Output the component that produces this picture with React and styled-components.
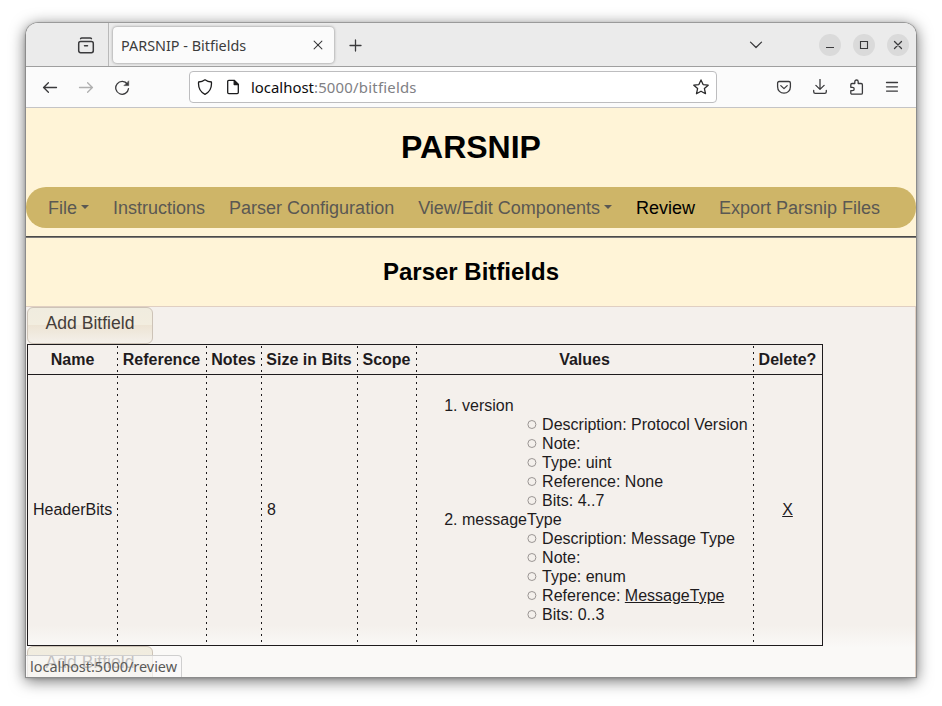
import React from "react";
import styled, { createGlobalStyle, css } from "styled-components";

const Global = createGlobalStyle`
  * { box-sizing: border-box; }
  html, body { margin: 0; background: #fff; overflow: hidden; }
`;

const ui = `"Noto Sans", "Open Sans", sans-serif`;
const ink = "#1e1b1d";

const Desktop = styled.div`
  width: 942px;
  height: 706px;
  padding: 22px 0 0 25px;
  font-family: "Liberation Sans", Arial, sans-serif;
`;

const Window = styled.div`
  position: relative;
  display: flex;
  flex-direction: column;
  width: 892px;
  height: 656px;
  border: 1px solid #8c8c8c;
  border-top-color: #9a9a9a;
  border-radius: 13px 13px 0 0;
  overflow: hidden;
  background: #faf9f7;
`;

const Shadow = styled.div`
  width: 892px;
  border-radius: 13px 13px 0 0;
  box-shadow: 0 3px 15px rgba(0, 0, 0, 0.55), 0 1px 3px rgba(0, 0, 0, 0.15);
`;

const TabStrip = styled.div`
  display: flex;
  align-items: center;
  flex: none;
  height: 44px;
  padding-top: 1px;
  background: #ebebeb;
  border-bottom: 1px solid #9f9f9f;
`;

const ViewButton = styled.div`
  display: flex;
  align-items: center;
  align-self: stretch;
  width: 83px;
  margin-top: -1px;
  padding: 1px 0 0 50px;
  border-right: 1px solid #b9b9b9;
`;

const Tab = styled.div`
  display: flex;
  align-items: center;
  justify-content: space-between;
  width: 221px;
  height: 36px;
  margin-left: 4px;
  padding: 0 10px 0 8px;
  border-radius: 4px;
  background: #fbfbfb;
  box-shadow: 0 0 3px rgba(0, 0, 0, 0.45);
`;

const TabTitle = styled.span`
  padding-top: 2px;
  font: 14.4px/20px ${ui};
  color: #3c3c3c;
`;

const NewTab = styled.div`
  display: flex;
  margin-left: 13px;
`;

const WindowControls = styled.div`
  display: flex;
  align-items: center;
  gap: 12px;
  margin-left: auto;
  padding-right: 7px;
`;

const TabsMenu = styled.div`
  display: flex;
  margin-right: 43px;
`;

const RoundButton = styled.div`
  display: flex;
  align-items: center;
  justify-content: center;
  width: 22px;
  height: 22px;
  border-radius: 50%;
  background: #dadada;
`;

const NavBar = styled.div`
  display: flex;
  align-items: center;
  flex: none;
  height: 41px;
  padding: 0 16px;
  background: #fbfbfb;
  border-bottom: 1px solid #c4c4c6;
`;

const NavButtons = styled.div`
  display: flex;
  gap: 20px;
  width: 147px;
`;

const AddressBar = styled.div`
  display: flex;
  align-items: center;
  width: 528px;
  height: 32px;
  padding: 0 7px;
  gap: 12px;
  border: 1px solid #bdbdbf;
  border-radius: 4px;
  background: #fff;
`;

const Url = styled.span`
  flex: 1;
  margin-left: -2px;
  font: 14.9px/20px ${ui};
  letter-spacing: 0.22px;
  color: #808084;
`;

const Host = styled.span`
  letter-spacing: 0;
  color: #0c0c0d;
`;

const NavTools = styled.div`
  display: flex;
  gap: 20px;
  margin-left: auto;
`;

const Page = styled.main`
  display: flex;
  flex-direction: column;
  flex: 1;
  min-height: 0;
  background: #fff4d7;
`;

const Title = styled.h1`
  margin: 0;
  font-size: 32px;
  line-height: 79px;
  text-align: center;
  color: #000;
`;

const Menu = styled.nav`
  display: flex;
  align-items: center;
  gap: 24px;
  height: 41px;
  padding: 1px 22px 0;
  border-radius: 20px;
  background: #ceb568;
`;

const MenuItem = styled.span`
  display: flex;
  align-items: center;
  font-size: 18px;
  line-height: 40px;
  white-space: nowrap;
  color: ${(p) => (p.$active ? "#000" : "#5a5853")};
  ${(p) =>
    p.$dropdown &&
    css`
      &::after {
        content: "";
        margin: 0 0 2px 4px;
        border: 4px solid transparent;
        border-top-color: currentColor;
        border-bottom: 0;
      }
    `}
`;

const Rule = styled.hr`
  width: 100%;
  height: 2px;
  margin: 8px 0 0;
  border: 0;
  border-top: 1px solid #4b4a48;
  background: #7d7a78;
`;

const Subtitle = styled.h2`
  margin: 0;
  font-size: 24px;
  line-height: 68px;
  text-align: center;
  color: #000;
`;

const Content = styled.section`
  flex: 1;
  min-height: 0;
  overflow: hidden;
  border: solid #e0cfc2;
  border-width: 1px 1px 0 0;
  padding-left: 1px;
  color: ${ink};
  background: linear-gradient(#f4f0ec 0, #f4f0ec 318px, #faf9f7 341px);
`;

const AddButton = styled.button`
  display: block;
  width: 126px;
  height: 37px;
  padding: 0 0 5px;
  border: 1px solid #cdc3b7;
  border-radius: 6px;
  font: 17.6px/20px "Liberation Sans", Arial, sans-serif;
  color: #453e3a;
  background: linear-gradient(#f0ecdf 0, #f2eddf 48%, #ede4d4 50%, #f4f0ea 100%);
`;

const Table = styled.table`
  table-layout: fixed;
  width: 796px;
  border-collapse: separate;
  border-spacing: 0;
  font-size: 16px;
  line-height: 19px;
  border-right: 1px solid ${ink};
`;

const Col = styled.col`
  width: ${(p) => p.$w}px;
`;

const dashes = css`
  &:first-child { border-left: 1px solid ${ink}; padding-left: 5px; }
  &:not(:first-child) {
    background: repeating-linear-gradient(transparent 0 1px, ${ink} 1px 3px, transparent 3px 6px) 0 0 / 1px 100% no-repeat;
  }
`;

const Th = styled.th`
  height: 30px;
  padding: 0;
  white-space: nowrap;
  border-top: 1px solid ${ink};
  ${dashes}
  &:first-child { padding-left: 0; }
`;

const Td = styled.td`
  height: 272px;
  padding: 0 5px 1px ${(p) => (p.$center ? 5 : 6)}px;
  vertical-align: middle;
  white-space: nowrap;
  text-align: ${(p) => (p.$center ? "center" : "left")};
  border: solid ${ink};
  border-width: 1px 0;
  ${dashes}
`;

const Values = styled.ol`
  margin: 0;
  padding: 1px 0 0 40px;
`;

const Details = styled.ul`
  margin: 0;
  padding-left: 65px;
  list-style: none;
`;

const Detail = styled.li`
  display: flex;
  align-items: center;
  &::before {
    content: "";
    flex: none;
    width: 7px;
    height: 7px;
    margin: 0 6px 0 1px;
    border: 1px solid #9a9593;
    border-radius: 50%;
    margin-right: 7px;
    margin-left: 0;
    transform: translateX(0.4px);
  }
`;

const DetailText = styled.span`
  margin-left: -0.9px;
`;

const Link = styled.a`
  text-decoration: underline;
  color: ${ink};
`;

const Status = styled.div`
  position: absolute;
  left: 0;
  bottom: 0;
  width: 156px;
  height: 22px;
  padding-left: 4px;
  border: solid #cfcfcf;
  border-width: 1px 1px 0 0;
  border-top-right-radius: 4px;
  background: rgba(250, 250, 249, 0.7);
  font: 14.45px/21px ${ui};
  white-space: nowrap;
  color: #5a5a58;
`;

const Icon = ({ size = 16, box = 16, color = "#3a3a3c", children, w = 1.3 }) => (
  <svg width={size} height={size} viewBox={`0 0 ${box} ${box}`} fill="none" stroke={color}
    strokeWidth={w} strokeLinecap="round" strokeLinejoin="round">
    {children}
  </svg>
);

const columns = [
  ["Name", 90], ["Reference", 89], ["Notes", 55], ["Size in Bits", 96],
  ["Scope", 59], ["Values", 337], ["Delete?", 69],
];

const values = [
  { name: "version", details: ["Description: Protocol Version", "Note:", "Type: uint", "Reference: None", "Bits: 4..7"] },
  { name: "messageType", details: ["Description: Message Type", "Note:", "Type: enum", <>Reference: <Link>MessageType</Link></>, "Bits: 0..3"] },
];

export default function App() {
  return (
    <Desktop>
      <Global />
      <Shadow>
        <Window>
          <TabStrip>
            <ViewButton>
              <Icon size={20} box={20} w={1.5}>
                <rect x="2.7" y="6.5" width="14.6" height="11.2" rx="1.9" />
                <path d="M4.6 3.7C4.9 3.1 5.3 3 5.8 3h8.400c.5 0 .9.100 1.200.7" />
                <path d="M8.500 10.700h3" />
              </Icon>
            </ViewButton>
            <Tab>
              <TabTitle>PARSNIP - Bitfields</TabTitle>
              <Icon size={12} w={1.4}><path d="M2.8 2.8l10.4 10.4M13.2 2.8L2.8 13.2" /></Icon>
            </Tab>
            <NewTab><Icon><path d="M8.500 3v11M3 8.500h11" /></Icon></NewTab>
            <WindowControls>
              <TabsMenu><Icon><path d="M2.5 5.1L8 10.5l5.500-5.400" /></Icon></TabsMenu>
              <RoundButton><Icon w={1}><path d="M4 10.500h8" strokeLinecap="butt" /></Icon></RoundButton>
              <RoundButton><Icon w={1.1}><path d="M4.500 4.500h7v7h-7z" strokeLinejoin="miter" /></Icon></RoundButton>
              <RoundButton><Icon><path d="M4.500 4.500l7 7M11.500 4.500l-7 7" /></Icon></RoundButton>
            </WindowControls>
          </TabStrip>
          <NavBar>
            <NavButtons>
              <Icon><path d="M14.5 8.5h-13M6.400 3.700L1.600 8.500l4.800 4.800" /></Icon>
              <Icon color="#b0b0b0"><path d="M1.500 8.500h13M9.600 3.700l4.800 4.800-4.800 4.800" /></Icon>
              <Icon>
                <path d="M13.4 5.200A6.400 6.400 0 1 0 14.500 9.600" />
                <path d="M14.700 2.200v4.400h-4.400z" fill="#3a3a3c" strokeWidth=".6" />
              </Icon>
            </NavButtons>
            <AddressBar>
              <Icon color="#1b1b1c"><path d="M8 .8C6.200 2.100 3.700 2.900 1.600 3c-.5 5.300 1.600 10 6.400 12.300C12.800 13 14.900 8.300 14.400 3 12.300 2.900 9.800 2.100 8 .8z" /></Icon>
              <Icon color="#1b1b1c">
                <path d="M3.800 1.400h5.400l4.100 4.100v8c0 .7-.4 1.100-1.100 1.100H3.800c-.7 0-1.100-.4-1.100-1.100v-11c0-.7.4-1.100 1.100-1.100z" />
                <path d="M9.200 1.400v4.100h4.100z" fill="#1b1b1c" />
              </Icon>
              <Url><Host>localhost</Host>:5000/bitfields</Url>
              <Icon color="#2b2b2c"><path d="M8 .9l2.100 4.700 5.100.6-3.800 3.400 1.100 5.100L8 12.200l-4.500 2.500 1.100-5.100L.8 6.200l5.100-.6z" /></Icon>
            </AddressBar>
            <NavTools>
              <Icon>
                <path d="M3.200 2.500h9.600c1 0 1.600.6 1.600 1.600v3.600c0 3.800-2.700 6.500-6.400 6.500S1.600 11.500 1.600 7.700V4.100c0-1 .6-1.600 1.600-1.600z" />
                <path d="M4.800 6.600L8 9.600l3.200-3" />
              </Icon>
              <Icon><path d="M8 .4v9.800M3.900 6.400L8 10.400l4.100-4M1.700 11.500v1.300c0 1 .6 1.600 1.600 1.600h9.400c1 0 1.600-.6 1.600-1.600v-1.300" /></Icon>
              <Icon>
                <path d="M6.800 4.500V2.700a1.700 1.700 0 0 1 3.400 0v1.800h2.900c.8 0 1.300.5 1.300 1.300v8.100c0 .8-.5 1.300-1.300 1.300H4.100c-.8 0-1.300-.5-1.300-1.300v-2.200h1.700a1.700 1.700 0 0 0 0-3.400H2.800V5.800c0-.8.5-1.300 1.300-1.300z" />
              </Icon>
              <Icon><path d="M2.500 3.500h11M2.500 7.800h11M2.500 12.100h11" /></Icon>
            </NavTools>
          </NavBar>
          <Page>
            <Title>PARSNIP</Title>
            <Menu>
              <MenuItem $dropdown>File</MenuItem>
              <MenuItem>Instructions</MenuItem>
              <MenuItem>Parser Configuration</MenuItem>
              <MenuItem $dropdown>View/Edit Components</MenuItem>
              <MenuItem $active>Review</MenuItem>
              <MenuItem>Export Parsnip Files</MenuItem>
            </Menu>
            <Rule />
            <Subtitle>Parser Bitfields</Subtitle>
            <Content>
              <AddButton>Add Bitfield</AddButton>
              <Table>
                <colgroup>{columns.map(([n, w]) => <Col key={n} $w={w} />)}</colgroup>
                <thead><tr>{columns.map(([n]) => <Th key={n}>{n}</Th>)}</tr></thead>
                <tbody>
                  <tr>
                    <Td>HeaderBits</Td>
                    <Td />
                    <Td />
                    <Td>8</Td>
                    <Td />
                    <Td>
                      <Values>
                        {values.map((v) => (
                          <li key={v.name}>
                            {v.name}
                            <Details>
                              {v.details.map((d, i) => <Detail key={i}><DetailText>{d}</DetailText></Detail>)}
                            </Details>
                          </li>
                        ))}
                      </Values>
                    </Td>
                    <Td $center><Link>X</Link></Td>
                  </tr>
                </tbody>
              </Table>
              <AddButton>Add Bitfield</AddButton>
            </Content>
          </Page>
          <Status>localhost:5000/review</Status>
        </Window>
      </Shadow>
    </Desktop>
  );
}
